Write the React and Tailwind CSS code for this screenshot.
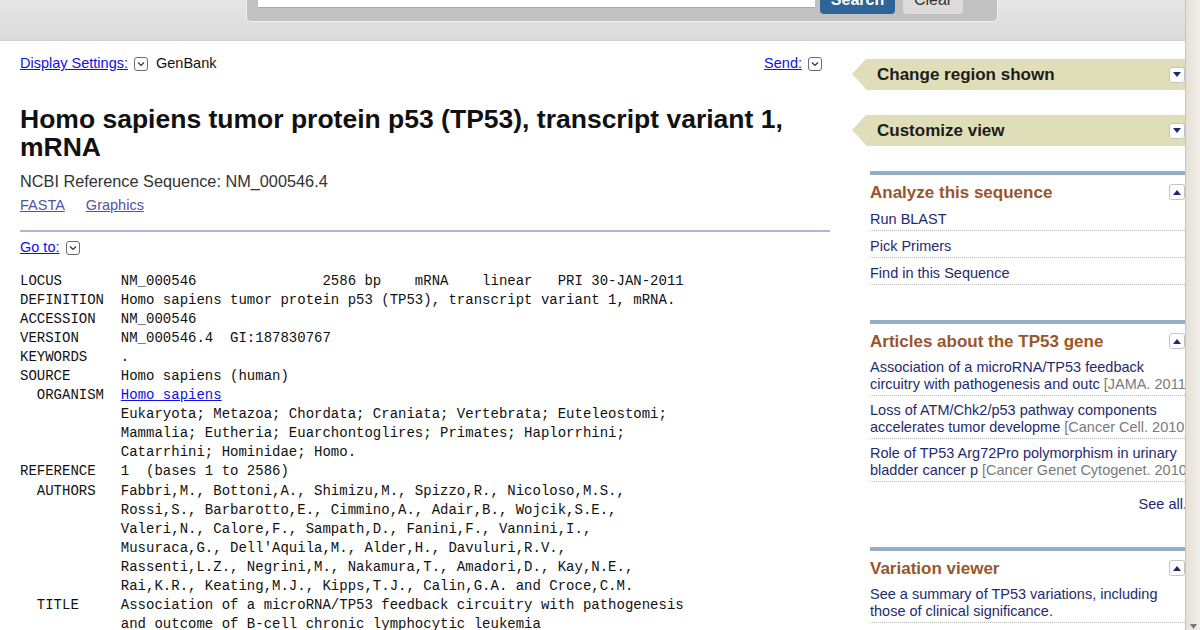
import React from 'react';

const SANS = { fontFamily: '"Liberation Sans", Arial, sans-serif' };

const DropIcon = () => (
  <span className="inline-flex items-center justify-center w-[14px] h-[14px] border border-[#6b6b6b] rounded-[3px] bg-white align-middle">
    <svg width="8" height="6" viewBox="0 0 8 6" fill="none">
      <path d="M1 1.5 L4 4.5 L7 1.5" stroke="#333" strokeWidth="1.2" />
    </svg>
  </span>
);

const ToggleIcon = ({ up }) => (
  <span className="flex items-center justify-center w-[16px] h-[16px] border border-[#c4c4c4] rounded-[3px] bg-white shrink-0">
    <svg width="8" height="5" viewBox="0 0 8 5">
      {up ? <path d="M0 5 L4 0 L8 5 Z" fill="#1b2a6b" /> : <path d="M0 0 L8 0 L4 5 Z" fill="#1b2a6b" />}
    </svg>
  </span>
);

const record = [
  ['LOCUS       NM_000546               2586 bp    mRNA    linear   PRI 30-JAN-2011'],
  ['DEFINITION  Homo sapiens tumor protein p53 (TP53), transcript variant 1, mRNA.'],
  ['ACCESSION   NM_000546'],
  ['VERSION     NM_000546.4  GI:187830767'],
  ['KEYWORDS    .'],
  ['SOURCE      Homo sapiens (human)'],
  ['  ORGANISM  ', 'Homo sapiens'],
  ['            Eukaryota; Metazoa; Chordata; Craniata; Vertebrata; Euteleostomi;'],
  ['            Mammalia; Eutheria; Euarchontoglires; Primates; Haplorrhini;'],
  ['            Catarrhini; Hominidae; Homo.'],
  ['REFERENCE   1  (bases 1 to 2586)'],
  ['  AUTHORS   Fabbri,M., Bottoni,A., Shimizu,M., Spizzo,R., Nicoloso,M.S.,'],
  ['            Rossi,S., Barbarotto,E., Cimmino,A., Adair,B., Wojcik,S.E.,'],
  ['            Valeri,N., Calore,F., Sampath,D., Fanini,F., Vannini,I.,'],
  ["            Musuraca,G., Dell'Aquila,M., Alder,H., Davuluri,R.V.,"],
  ['            Rassenti,L.Z., Negrini,M., Nakamura,T., Amadori,D., Kay,N.E.,'],
  ['            Rai,K.R., Keating,M.J., Kipps,T.J., Calin,G.A. and Croce,C.M.'],
  ['  TITLE     Association of a microRNA/TP53 feedback circuitry with pathogenesis'],
  ['            and outcome of B-cell chronic lymphocytic leukemia'],
];

const articles = [
  ['Association of a microRNA/TP53 feedback', 'circuitry with pathogenesis and outc', 'JAMA. 2011'],
  ['Loss of ATM/Chk2/p53 pathway components', 'accelerates tumor developme', 'Cancer Cell. 2010'],
  ['Role of TP53 Arg72Pro polymorphism in urinary', 'bladder cancer p', 'Cancer Genet Cytogenet. 2010'],
];

const Tab = ({ label, className }) => (
  <div className={`flex items-stretch h-[31px] ${className}`}>
    <div className="w-0 h-0 border-y-[15.5px] border-y-transparent border-r-[14px] border-r-[#dfdeb8]" />
    <div className="flex-1 flex items-center justify-between bg-[#dfdeb8] pl-[11px] pr-[10px]">
      <span className="text-[17px] font-bold text-[#1c1c1c]">{label}</span>
      <ToggleIcon />
    </div>
  </div>
);

const Panel = ({ title, children, className }) => (
  <div className={`border-t-[4px] border-[#95adc6] ${className}`}>
    <div className="flex items-start justify-between pt-[7px] pr-[10px]">
      <h3 className="text-[17px] font-bold leading-[22px] text-[#98562a]">{title}</h3>
      <div className="mt-[2px]"><ToggleIcon up /></div>
    </div>
    {children}
  </div>
);

export default function App() {
  return (
    <div className="flex w-[1200px] h-[630px] overflow-hidden bg-white" style={SANS}>
      <div className="w-[1185px] overflow-hidden">
        {/* header search bar */}
        <div className="h-[41px] bg-gradient-to-b from-[#e6e6e6] to-[#dadada] border-b border-[#d0d0d0] relative">
          <div className="absolute left-[246px] top-[-20px] w-[752px] h-[42px] bg-[#c1c1c1] rounded-b-[5px] border border-[#f2f2f2] flex items-end pb-[7px] pl-[11px] gap-[5px]">
            <div className="w-[557px] h-[30px] bg-white border-b border-[#b3a795] mb-[6px]" />
            <div className="w-[75px] h-[34px] bg-[#2f6499] rounded-[4px] flex items-center justify-center text-white font-bold text-[16px] pt-[6px]">Search</div>
            <div className="ml-[3px] w-[60px] h-[34px] bg-[#dcdcdc] rounded-[4px] flex items-center justify-center text-[#333] text-[16px] pt-[6px]">Clear</div>
          </div>
        </div>

        <div className="flex pt-[13px]">
          {/* left column */}
          <div className="ml-[20px] w-[810px] shrink-0">
            <div className="flex items-center justify-between text-[14.5px] leading-[18px] pr-[8px]">
              <div className="flex items-center">
                <a className="text-[#1010e8] underline">Display Settings:</a>
                <span className="ml-[6px]"><DropIcon /></span>
                <span className="ml-[8px] text-[#111]">GenBank</span>
              </div>
              <div className="flex items-center">
                <a className="text-[#1010e8] underline">Send:</a>
                <span className="ml-[6px]"><DropIcon /></span>
              </div>
            </div>

            <h1 className="mt-[33px] text-[26.5px] font-bold leading-[28px] text-[#111]">
              Homo sapiens tumor protein p53 (TP53), transcript variant 1, mRNA
            </h1>
            <div className="mt-[10px] text-[16.3px] leading-[20px] text-[#333]">NCBI Reference Sequence: NM_000546.4</div>
            <div className="mt-[5px] flex gap-[21px] text-[14.5px] leading-[18px] text-[#5252a8]">
              <a className="underline">FASTA</a>
              <a className="underline">Graphics</a>
            </div>
            <div className="mt-[16px] h-[2px] bg-[#a9b8d2]" />
            <div className="mt-[6px] flex items-center text-[14.5px] leading-[18px]">
              <a className="text-[#1010e8] underline">Go to:</a>
              <span className="ml-[6px]"><DropIcon /></span>
            </div>

            <pre className="mt-[16px] text-[14px] leading-[19.05px] text-[#111]" style={{ fontFamily: '"Liberation Mono", "Courier New", monospace' }}>
              {record.map((r, i) => (
                <div key={i}>
                  {r[0]}
                  {r[1] && <a className="text-[#1010e8] underline">{r[1]}</a>}
                </div>
              ))}
            </pre>
          </div>

          {/* right column */}
          <div className="ml-[20px] w-[345px] shrink-0 text-[14.5px]">
            <Tab label="Change region shown" className="mt-[5px] ml-[2px]" />
            <Tab label="Customize view" className="mt-[25px] ml-[2px]" />

            <div className="ml-[20px]">
              <Panel title="Analyze this sequence" className="mt-[25px]">
                {['Run BLAST', 'Pick Primers', 'Find in this Sequence'].map((t) => (
                  <div key={t} className="pt-[6px] pb-[2px] leading-[18px] text-[#1f2a6e] border-b border-dotted border-[#bdbdbd]">{t}</div>
                ))}
              </Panel>

              <Panel title="Articles about the TP53 gene" className="mt-[35px]">
                {articles.map(([a, b, c]) => (
                  <div key={a} className="pt-[6px] pb-[2px] leading-[17px] border-b border-dotted border-[#bdbdbd] whitespace-nowrap overflow-hidden">
                    <div className="text-[#1f2a6e]">{a}</div>
                    <div>
                      <span className="text-[#1f2a6e]">{b}</span>{' '}
                      <span className="text-[#7a7a7a]">[{c}</span>
                    </div>
                  </div>
                ))}
                <div className="mt-[13px] text-right leading-[18px] text-[#1f2a6e] whitespace-nowrap">
                  See all...
                </div>
              </Panel>

              <Panel title="Variation viewer" className="mt-[34px]">
                <div className="pt-[6px] pb-[2px] leading-[17px] text-[#1f2a6e] border-b border-dotted border-[#bdbdbd]">
                  See a summary of TP53 variations, including<br />those of clinical significance.
                </div>
              </Panel>
            </div>
          </div>
        </div>
      </div>

      {/* scrollbar */}
      <div className="w-[15px] h-[630px] bg-gradient-to-r from-[#e6e0d7] to-[#f2eee9] border-l border-[#cfc3b3] flex flex-col justify-end items-center pb-[1px]">
        <svg width="7" height="5" viewBox="0 0 7 5"><path d="M0 0 L7 0 L3.5 5 Z" fill="#777" /></svg>
      </div>
    </div>
  );
}
